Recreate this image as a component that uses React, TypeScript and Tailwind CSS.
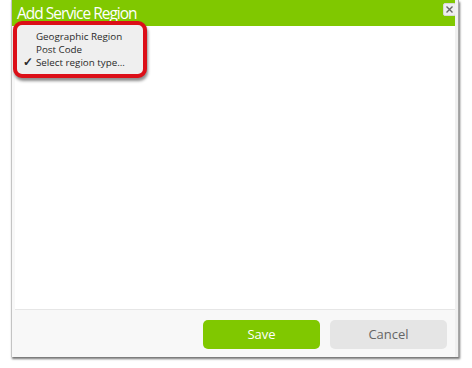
export default function App() {
  return (
    <div className="w-[472px] h-[368px] bg-white font-['Open_Sans',sans-serif] relative">
      {/* dialog */}
      <div className="ml-[11px] w-[448px] h-[357px] flex border-l border-[#c4c4c4] shadow-[1px_2px_2px_rgba(0,0,0,0.55)]">
        <div className="flex flex-col w-[443px]">
          {/* header */}
          <div className="h-[26px] bg-[#80c800] flex items-start justify-between pl-[5px]">
            <span className="text-white text-[15.5px] leading-none tracking-[-1px] mt-[6px]">Add Service Region</span>
            <button className="w-[13px] h-[13px] mt-[3px] mr-[-1px] rounded-[2px] bg-[#eeeeee] border border-[#d8d8d8] flex items-center justify-center">
              <svg width="9" height="9" viewBox="0 0 9 9">
                <path d="M1.5 1.5L7.5 7.5M7.5 1.5L1.5 7.5" stroke="#666" strokeWidth="1.4" />
              </svg>
            </button>
          </div>
          {/* body */}
          <div className="flex-1 bg-[#f8f8f8] pl-[3px]">
            <div className="h-full bg-white border-b border-[#e6e6e6]" />
          </div>
          {/* footer */}
          <div className="h-[47px] bg-[#f8f8f8] flex items-start justify-end gap-[10px] pt-[10px] pr-[8px]">
            <button className="w-[117px] h-[29px] rounded-[5px] bg-[#80c800] text-white text-[13px]">Save</button>
            <button className="w-[117px] h-[29px] rounded-[5px] bg-[#e5e5e5] text-[#666] text-[13px]">Cancel</button>
          </div>
        </div>
        <div className="w-[3px] bg-[#f0f0f0]" />
        <div className="w-[1px] bg-[#a8a8a8]" />
      </div>

      {/* highlighted select menu */}
      <div className="absolute left-[13px] top-[21px] w-[134px] h-[57px] rounded-[9px] border-[4px] border-[#dc0f18] bg-[#efefef] shadow-[1px_3px_3px_rgba(0,0,0,0.45)] pt-[5px]">
        <ul className="text-[9.8px] leading-[13px] text-[#2a2a2a] font-['Open_Sans',sans-serif]">
          <li className="pl-[19px]">Geographic Region</li>
          <li className="pl-[19px]">Post Code</li>
          <li className="pl-[19px] relative">
            <span className="absolute left-[6px] top-[-1px] text-[12px] font-bold">✓</span>
            Select region type...
          </li>
        </ul>
      </div>
    </div>
  );
}
